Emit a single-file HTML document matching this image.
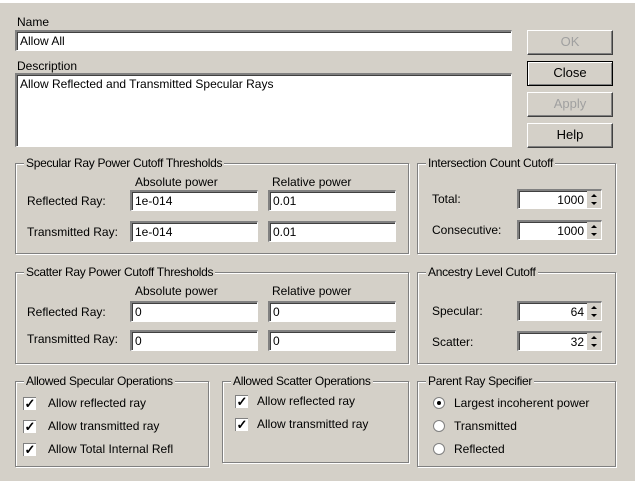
<!DOCTYPE html><html><head><style>
body{margin:0;width:635px;height:481px;background:#d4d0c8;position:relative;overflow:hidden;font-family:"Liberation Sans",sans-serif;font-size:12px;color:#000}
div,span{position:absolute}
.t{white-space:nowrap;line-height:14px}
.in{background:#fff;border-top:2px solid #808080;border-left:2px solid #808080;border-bottom:1px solid #fff;border-right:1px solid #fff;box-shadow:inset 1px 1px 0 #404040;box-sizing:border-box;padding:2px 3px;line-height:14px;white-space:nowrap}
.btn{box-sizing:border-box;border:1px solid #fff;border-right-color:#404040;border-bottom-color:#404040;box-shadow:inset -1px -1px 0 #808080;text-align:center;line-height:22px;font-size:13px}
.g{border:1px solid #808080;box-shadow:1px 1px 0 #fff,inset 1px 1px 0 #fff;box-sizing:border-box}
.gt{background:#d4d0c8;padding:0 2px;top:-8px;left:8px;white-space:nowrap;line-height:14px;letter-spacing:-0.3px}
.sp{right:0;top:0;width:14px;height:100%;background:#d4d0c8}
.sp:before,.sp:after{content:"";position:absolute;left:4px;border-left:3px solid transparent;border-right:3px solid transparent}
.sp:before{top:3px;border-bottom:3px solid #000}.sp:after{bottom:3px;border-top:3px solid #000}
.cb{width:13px;height:13px;background:#fff;border-top:1px solid #808080;border-left:1px solid #808080;box-sizing:border-box;font-size:13px;line-height:12px;text-align:center;font-weight:bold}
.rd{width:12px;height:12px;border-radius:50%;background:#fff;border:1px solid #808080;box-sizing:border-box}
</style></head><body>
<div style="left:0;top:0;width:635px;height:3px;background:#fff"></div>
<div class="t" style="left:17px;top:15px">Name</div>
<div class="in" style="left:15px;top:30px;width:497px;height:21px">Allow All</div>
<div class="t" style="left:17px;top:59px">Description</div>
<div class="in" style="left:15px;top:73px;width:497px;height:74px">Allow Reflected and Transmitted Specular Rays</div>
<div class="btn" style="left:527px;top:30px;width:86px;height:25px;color:#a0a0a0">OK</div>
<div class="btn" style="left:527px;top:61px;width:86px;height:25px;border:1px solid #000;box-shadow:inset 1px 1px 0 #fff,inset -1px -1px 0 #808080">Close</div>
<div class="btn" style="left:527px;top:92px;width:86px;height:25px;color:#a0a0a0">Apply</div>
<div class="btn" style="left:527px;top:123px;width:86px;height:25px">Help</div>

<div class="g" style="left:15px;top:163px;width:394px;height:91px"><span class="gt">Specular Ray Power Cutoff Thresholds</span></div>
<div class="t" style="left:135px;top:175px">Absolute power</div><div class="t" style="left:272px;top:175px">Relative power</div>
<div class="t" style="left:27px;top:194px">Reflected Ray:</div>
<div class="in" style="left:130px;top:190px;width:128px;height:21px">1e-014</div>
<div class="in" style="left:268px;top:190px;width:128px;height:21px">0.01</div>
<div class="t" style="left:27px;top:225px">Transmitted Ray:</div>
<div class="in" style="left:130px;top:221px;width:128px;height:21px">1e-014</div>
<div class="in" style="left:268px;top:221px;width:128px;height:21px">0.01</div>

<div class="g" style="left:417px;top:163px;width:199px;height:91px"><span class="gt">Intersection Count Cutoff</span></div>
<div class="t" style="left:432px;top:192px">Total:</div>
<div class="in" style="left:517px;top:189px;width:85px;height:20px;text-align:right;padding-right:17px">1000<span class="sp"></span></div>
<div class="t" style="left:432px;top:223px">Consecutive:</div>
<div class="in" style="left:517px;top:220px;width:85px;height:20px;text-align:right;padding-right:17px">1000<span class="sp"></span></div>

<div class="g" style="left:15px;top:272px;width:394px;height:92px"><span class="gt">Scatter Ray Power Cutoff Thresholds</span></div>
<div class="t" style="left:135px;top:284px">Absolute power</div><div class="t" style="left:272px;top:284px">Relative power</div>
<div class="t" style="left:27px;top:305px">Reflected Ray:</div>
<div class="in" style="left:130px;top:301px;width:128px;height:21px">0</div>
<div class="in" style="left:268px;top:301px;width:128px;height:21px">0</div>
<div class="t" style="left:27px;top:332px">Transmitted Ray:</div>
<div class="in" style="left:130px;top:330px;width:128px;height:21px">0</div>
<div class="in" style="left:268px;top:330px;width:128px;height:21px">0</div>

<div class="g" style="left:417px;top:272px;width:199px;height:92px"><span class="gt">Ancestry Level Cutoff</span></div>
<div class="t" style="left:432px;top:304px">Specular:</div>
<div class="in" style="left:517px;top:301px;width:85px;height:20px;text-align:right;padding-right:17px">64<span class="sp"></span></div>
<div class="t" style="left:432px;top:335px">Scatter:</div>
<div class="in" style="left:517px;top:331px;width:85px;height:20px;text-align:right;padding-right:17px">32<span class="sp"></span></div>

<div class="g" style="left:15px;top:381px;width:194px;height:86px"><span class="gt">Allowed Specular Operations</span></div>
<div class="cb" style="left:23px;top:397px">✓</div><div class="t" style="left:48px;top:396px">Allow reflected ray</div>
<div class="cb" style="left:23px;top:420px">✓</div><div class="t" style="left:48px;top:419px">Allow transmitted ray</div>
<div class="cb" style="left:23px;top:443px">✓</div><div class="t" style="left:48px;top:442px">Allow Total Internal Refl</div>

<div class="g" style="left:222px;top:381px;width:187px;height:82px"><span class="gt">Allowed Scatter Operations</span></div>
<div class="cb" style="left:235px;top:395px">✓</div><div class="t" style="left:257px;top:394px">Allow reflected ray</div>
<div class="cb" style="left:235px;top:418px">✓</div><div class="t" style="left:257px;top:417px">Allow transmitted ray</div>

<div class="g" style="left:417px;top:381px;width:199px;height:86px"><span class="gt">Parent Ray Specifier</span></div>
<div class="rd" style="left:433px;top:397px"><span style="left:3px;top:3px;width:4px;height:4px;border-radius:50%;background:#000"></span></div><div class="t" style="left:454px;top:396px">Largest incoherent power</div>
<div class="rd" style="left:433px;top:420px"></div><div class="t" style="left:454px;top:419px">Transmitted</div>
<div class="rd" style="left:433px;top:443px"></div><div class="t" style="left:454px;top:442px">Reflected</div>
</body></html>
